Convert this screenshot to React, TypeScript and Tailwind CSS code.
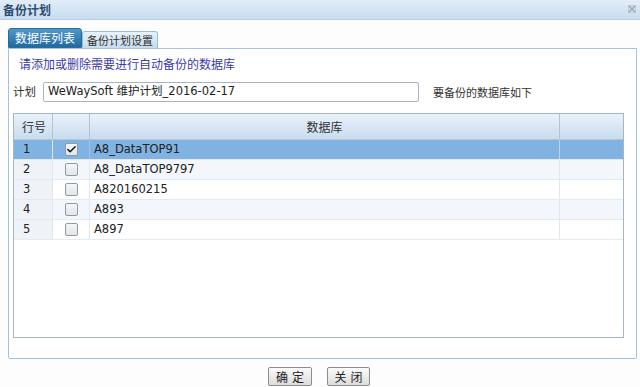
import { Check } from 'lucide-react';

const rows = [
  { no: 1, name: 'A8_DataTOP91', checked: true },
  { no: 2, name: 'A8_DataTOP9797', checked: false },
  { no: 3, name: 'A820160215', checked: false },
  { no: 4, name: 'A893', checked: false },
  { no: 5, name: 'A897', checked: false },
];

function CheckBox({ checked }: { checked: boolean }) {
  return (
    <div className="w-[13px] h-[13px] rounded-[2px] border border-[#8e9aa6] bg-gradient-to-b from-[#f4f6f8] to-[#e2e6ea] flex items-center justify-center">
      {checked && <Check className="w-[11px] h-[11px] text-[#111]" strokeWidth={3.2} />}
    </div>
  );
}

export default function App() {
  return (
    <div className="w-[640px] h-[387px] overflow-hidden bg-[#fdfdfd] text-[12px] text-[#222] font-['DejaVu_Sans','Noto_Sans_CJK_SC',sans-serif]">
      {/* Title bar */}
      <div className="h-[20px] flex items-center justify-between pl-[3px] pr-[4px] bg-gradient-to-b from-[#e2edf8] to-[#c7dcf0] border-b border-[#b8cde2]">
        <span className="font-bold text-[12px] text-[#2f4d70] font-['Noto_Sans_CJK_SC',sans-serif]">备份计划</span>
        <svg width="8" height="8" viewBox="0 0 8 8" className="mb-[2px]">
          <path d="M0.5 0.5 L7.5 7.5 M7.5 0.5 L0.5 7.5" stroke="#9aa4ae" strokeWidth="1.3" />
          <rect x="0.5" y="0.5" width="7" height="7" fill="none" stroke="#b9c2ca" strokeWidth="0.8" />
        </svg>
      </div>

      <div className="pl-[8px] pt-[8px]">
        {/* Tabs */}
        <div className="flex items-end h-[20px]">
          <div className="w-[74px] h-[20px] flex items-center justify-center rounded-t-[3px] border border-[#2a6b9c] bg-gradient-to-b from-[#4f97c9] to-[#1f6aa3] text-white text-[12px] font-['Noto_Sans_CJK_SC',sans-serif]">
            数据库列表
          </div>
          <div className="w-[76px] h-[17px] flex items-center justify-center rounded-t-[3px] border border-b-0 border-[#9bbcd6] bg-gradient-to-b from-[#e8f2fa] to-[#c6dced] text-[#333] text-[11px] font-['Noto_Sans_CJK_SC',sans-serif]">
            备份计划设置
          </div>
        </div>

        {/* Panel */}
        <div className="w-[629px] h-[311px] border border-[#a4c2da] rounded-b-[2px] bg-white pl-[4px] pt-[8px]">
          <div className="pl-[6px] h-[14px] leading-[14px] text-[#3b3ba8] font-['Noto_Sans_CJK_SC',sans-serif]">
            请添加或删除需要进行自动备份的数据库
          </div>

          <div className="flex items-center mt-[11px] h-[20px]">
            <span className="w-[30px] text-[#333] text-[11.5px] font-['Noto_Sans_CJK_SC',sans-serif]">计划</span>
            <div className="w-[376px] h-[20px] border border-[#a9b4be] rounded-[2px] bg-white flex items-center pl-[4px] text-[11.5px] text-[#222]">
              WeWaySoft 维护计划_2016-02-17
            </div>
            <span className="ml-[14px] text-[11px] text-[#333] font-['Noto_Sans_CJK_SC',sans-serif]">要备份的数据库如下</span>
          </div>

          {/* Grid */}
          <div className="mt-[11px] w-[611px] h-[225px] border border-[#a8b6c4] bg-white">
            <div className="grid grid-cols-[39px_37px_470px_1fr] h-[26px] bg-gradient-to-b from-[#e9f2fa] to-[#c8dcef] border-b border-[#b4c8da]">
              <div className="flex items-center pl-[8px] border-r border-[#b0c4d6] font-['Noto_Sans_CJK_SC',sans-serif] text-[#333]">行号</div>
              <div className="border-r border-[#b0c4d6]" />
              <div className="flex items-center justify-center border-r border-[#b0c4d6] font-['Noto_Sans_CJK_SC',sans-serif] text-[#333]">数据库</div>
              <div />
            </div>
            {rows.map((r, i) => {
              const sel = r.checked;
              const rowBg = sel ? 'bg-[#80b3e2]' : i % 2 === 1 ? 'bg-[#f3f7fb]' : 'bg-white';
              return (
                <div
                  key={r.no}
                  className={`grid grid-cols-[39px_37px_470px_1fr] h-[20px] border-b border-[#e2eaf2] ${rowBg}`}
                >
                  <div className={`flex items-center pl-[9px] text-[11.5px] border-r border-[#e0e7ee] ${sel ? '' : 'bg-[#eff3f7]'}`}>
                    {r.no}
                  </div>
                  <div className={`flex items-center justify-center border-r ${sel ? 'border-[#9cc4ea]' : 'border-[#e0e7ee]'}`}>
                    <CheckBox checked={r.checked} />
                  </div>
                  <div className={`flex items-center pl-[4px] text-[11.5px] border-r ${sel ? 'border-[#b8d6f2]' : 'border-[#e0e7ee]'}`}>
                    {r.name}
                  </div>
                  <div />
                </div>
              );
            })}
          </div>
        </div>
      </div>

      {/* Buttons */}
      <div className="flex justify-center gap-[15px] mt-[8px] pr-[2px]">
        <button className="w-[44px] h-[19px] border border-[#8c8c8c] rounded-[2px] bg-gradient-to-b from-[#fbfbfb] to-[#dcdcdc] text-[12px] text-[#222] font-['Noto_Sans_CJK_SC',sans-serif] leading-none tracking-[4px] pl-[4px]">
          确定
        </button>
        <button className="w-[43px] h-[19px] border border-[#8c8c8c] rounded-[2px] bg-gradient-to-b from-[#fbfbfb] to-[#dcdcdc] text-[12px] text-[#222] font-['Noto_Sans_CJK_SC',sans-serif] leading-none tracking-[4px] pl-[4px]">
          关闭
        </button>
      </div>
    </div>
  );
}
